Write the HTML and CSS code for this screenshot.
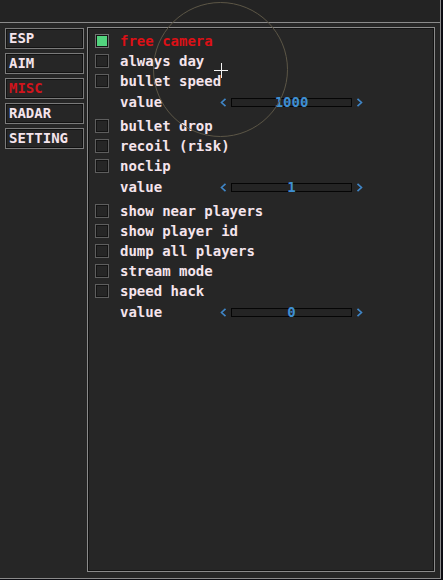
FILE: index.html
```html
<!DOCTYPE html>
<html lang="en">
<head>
    <meta charset="UTF-8">
    <title>Menu</title>
    <link rel="stylesheet" href="styles.css">
</head>
<body>
    <div class="window">
        <div class="titlebar"></div>
        <div class="main">
            <div class="sidebar">
                <div class="tab">ESP</div>
                <div class="tab">AIM</div>
                <div class="tab tab-active">MISC</div>
                <div class="tab">RADAR</div>
                <div class="tab">SETTING</div>
            </div>
            <div class="panel">
                <div class="row"><span class="check checked"></span><span class="label label-on">free camera</span></div>
                <div class="row"><span class="check"></span><span class="label">always day</span></div>
                <div class="row"><span class="check"></span><span class="label">bullet speed</span></div>
                <div class="value-row">
                    <span class="label value-label">value</span>
                    <div class="slider">
                        <svg class="arrow" width="7" height="9" viewBox="0 0 7 9"><path d="M5.5 0.8 L1.5 4.5 L5.5 8.2" /></svg>
                        <div class="bar">1000</div>
                        <svg class="arrow" width="7" height="9" viewBox="0 0 7 9"><path d="M1.5 0.8 L5.5 4.5 L1.5 8.2" /></svg>
                    </div>
                </div>
                <div class="row"><span class="check"></span><span class="label">bullet drop</span></div>
                <div class="row"><span class="check"></span><span class="label">recoil (risk)</span></div>
                <div class="row"><span class="check"></span><span class="label">noclip</span></div>
                <div class="value-row">
                    <span class="label value-label">value</span>
                    <div class="slider">
                        <svg class="arrow" width="7" height="9" viewBox="0 0 7 9"><path d="M5.5 0.8 L1.5 4.5 L5.5 8.2" /></svg>
                        <div class="bar">1</div>
                        <svg class="arrow" width="7" height="9" viewBox="0 0 7 9"><path d="M1.5 0.8 L5.5 4.5 L1.5 8.2" /></svg>
                    </div>
                </div>
                <div class="row"><span class="check"></span><span class="label">show near players</span></div>
                <div class="row"><span class="check"></span><span class="label">show player id</span></div>
                <div class="row"><span class="check"></span><span class="label">dump all players</span></div>
                <div class="row"><span class="check"></span><span class="label">stream mode</span></div>
                <div class="row"><span class="check"></span><span class="label">speed hack</span></div>
                <div class="value-row">
                    <span class="label value-label">value</span>
                    <div class="slider">
                        <svg class="arrow" width="7" height="9" viewBox="0 0 7 9"><path d="M5.5 0.8 L1.5 4.5 L5.5 8.2" /></svg>
                        <div class="bar">0</div>
                        <svg class="arrow" width="7" height="9" viewBox="0 0 7 9"><path d="M1.5 0.8 L5.5 4.5 L1.5 8.2" /></svg>
                    </div>
                </div>
            </div>
        </div>
        <!-- mouse cursor overlay -->
        <svg class="cursor" width="440" height="200" viewBox="0 0 440 200">
            <circle cx="220.5" cy="69.5" r="67" fill="none" stroke="#5c5646" stroke-width="1" />
            <path d="M214 70.5 H228 M221.5 63 V78" stroke="#f4f4f4" stroke-width="1" />
        </svg>
    </div>
</body>
</html>
```

FILE: styles.css
```css
* {
    margin: 0;
    padding: 0;
    box-sizing: border-box;
}

body {
    background: #0c0c12;
    font-family: "DejaVu Sans Mono", monospace;
    font-size: 14px;
    color: #f5e4ec;
}

.window {
    position: relative;
    width: 441px;
    height: 579px;
    background: #262626;
    border-right: 1px solid #8a8a8a;
    border-bottom: 1px solid #8a8a8a;
}

.titlebar {
    height: 23px;
    background: #232323;
    border-bottom: 1px solid #8a8a8a;
}

.main {
    display: flex;
    align-items: flex-start;
}

.sidebar {
    display: flex;
    flex-direction: column;
    gap: 4px;
    width: 79px;
    margin: 5px 0 0 5px;
}

.tab {
    height: 21px;
    padding-left: 3px;
    line-height: 19px;
    font-weight: bold;
    border: 1px solid #7a7a7a;
    box-shadow: inset 0 0 0 1px #121212;
}

.tab-active {
    color: #d0141c;
}

.panel {
    width: 348px;
    height: 545px;
    margin: 4px 0 0 3px;
    padding: 3px 0 0 7px;
    border: 1px solid #8a8a8a;
    box-shadow: inset 0 0 0 1px #121212;
}

.row {
    display: flex;
    align-items: center;
    gap: 11px;
    height: 20px;
}

.check {
    width: 14px;
    height: 14px;
    border: 1px solid #5e5e5e;
    box-shadow: inset 0 0 0 1px #141414;
}

.checked {
    background: #52d47e;
    border-color: #707070;
    box-shadow: inset 0 0 0 1px #141414;
}

.label {
    font-weight: bold;
    line-height: 20px;
    white-space: pre;
}

.label-on {
    color: #dc1016;
}

.value-row {
    display: flex;
    align-items: center;
    height: 20px;
    margin: 1px 0 4px;
    padding-left: 25px;
}

.value-label {
    width: 100px;
}

.slider {
    display: flex;
    align-items: center;
    gap: 4px;
}

.arrow path {
    fill: none;
    stroke: #3f86c8;
    stroke-width: 1.6;
}

.bar {
    width: 121px;
    height: 9px;
    border: 1px solid #050505;
    background: #242424;
    color: #3e8fd2;
    font-weight: bold;
    line-height: 7px;
    text-align: center;
}

.cursor {
    position: absolute;
    left: 0;
    top: 0;
    pointer-events: none;
}
```
